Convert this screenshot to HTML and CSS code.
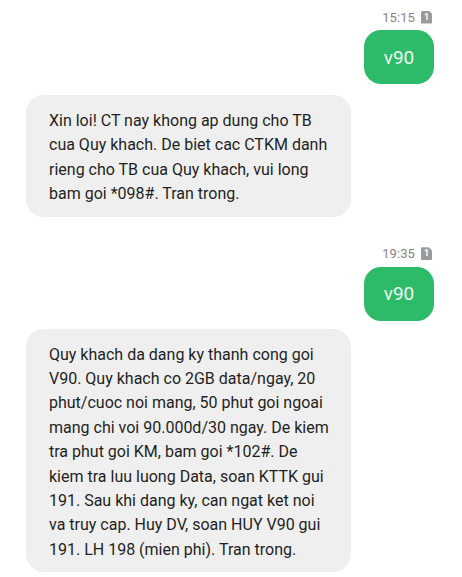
FILE: index.html
```html
<!DOCTYPE html>
<html lang="vi">
<head>
<meta charset="utf-8">
<link rel="stylesheet" href="styles.css">
</head>
<body>
<div class="chat">
  <div class="meta">
    <span class="time">15:15</span>
    <span class="sim">1</span>
  </div>
  <div class="out">v90</div>
  <div class="in in-first">Xin loi! CT nay khong ap dung cho TB<br>cua Quy khach. De biet cac CTKM danh<br>rieng cho TB cua Quy khach, vui long<br>bam goi *098#. Tran trong.</div>

  <div class="meta meta-second">
    <span class="time">19:35</span>
    <span class="sim">1</span>
  </div>
  <div class="out">v90</div>
  <div class="in in-second">Quy khach da dang ky thanh cong goi<br>V90. Quy khach co 2GB data/ngay, 20<br>phut/cuoc noi mang, 50 phut goi ngoai<br>mang chi voi 90.000d/30 ngay. De kiem<br>tra phut goi KM, bam goi *102#. De<br>kiem tra luu luong Data, soan KTTK gui<br>191. Sau khi dang ky, can ngat ket noi<br>va truy cap. Huy DV, soan HUY V90 gui<br>191. LH 198 (mien phi). Tran trong.</div>
</div>
</body>
</html>
```

FILE: styles.css
```css
html, body {
  margin: 0;
  padding: 0;
  background: #ffffff;
}

body {
  font-family: Roboto, "Liberation Sans", sans-serif;
  width: 462px;
  height: 577px;
  overflow: hidden;
}

.chat {
  display: flex;
  flex-direction: column;
  padding: 10px 28px 0 26px;
}

.meta {
  align-self: flex-end;
  display: flex;
  align-items: center;
  gap: 6px;
  height: 14px;
  margin-right: 2px;
}

.meta-second {
  margin-top: 30px;
}

.time {
  font-size: 13px;
  color: #858585;
  letter-spacing: 0.1px;
}

.sim {
  width: 11px;
  height: 13px;
  background: #9b9b9b;
  color: #ffffff;
  font-size: 9px;
  font-weight: 700;
  line-height: 13px;
  text-align: center;
  border-radius: 1.5px;
  clip-path: polygon(0 0, 70% 0, 100% 25%, 100% 100%, 0 100%);
}

.out {
  align-self: flex-end;
  margin-top: 6px;
  width: 70px;
  height: 54px;
  border-radius: 17px;
  background: #2dbb6a;
  color: #eefcf2;
  font-size: 19px;
  display: flex;
  align-items: center;
  justify-content: center;
}

.in {
  align-self: flex-start;
  width: 325px;
  box-sizing: border-box;
  padding: 14px 8px 10px 23px;
  background: #efefef;
  border-radius: 18px;
  color: #1f1f1f;
  font-size: 16px;
  line-height: 24.4px;
  white-space: nowrap;
}

.in-first {
  margin-top: 11px;
}

.in-second {
  margin-top: 8px;
}
```
